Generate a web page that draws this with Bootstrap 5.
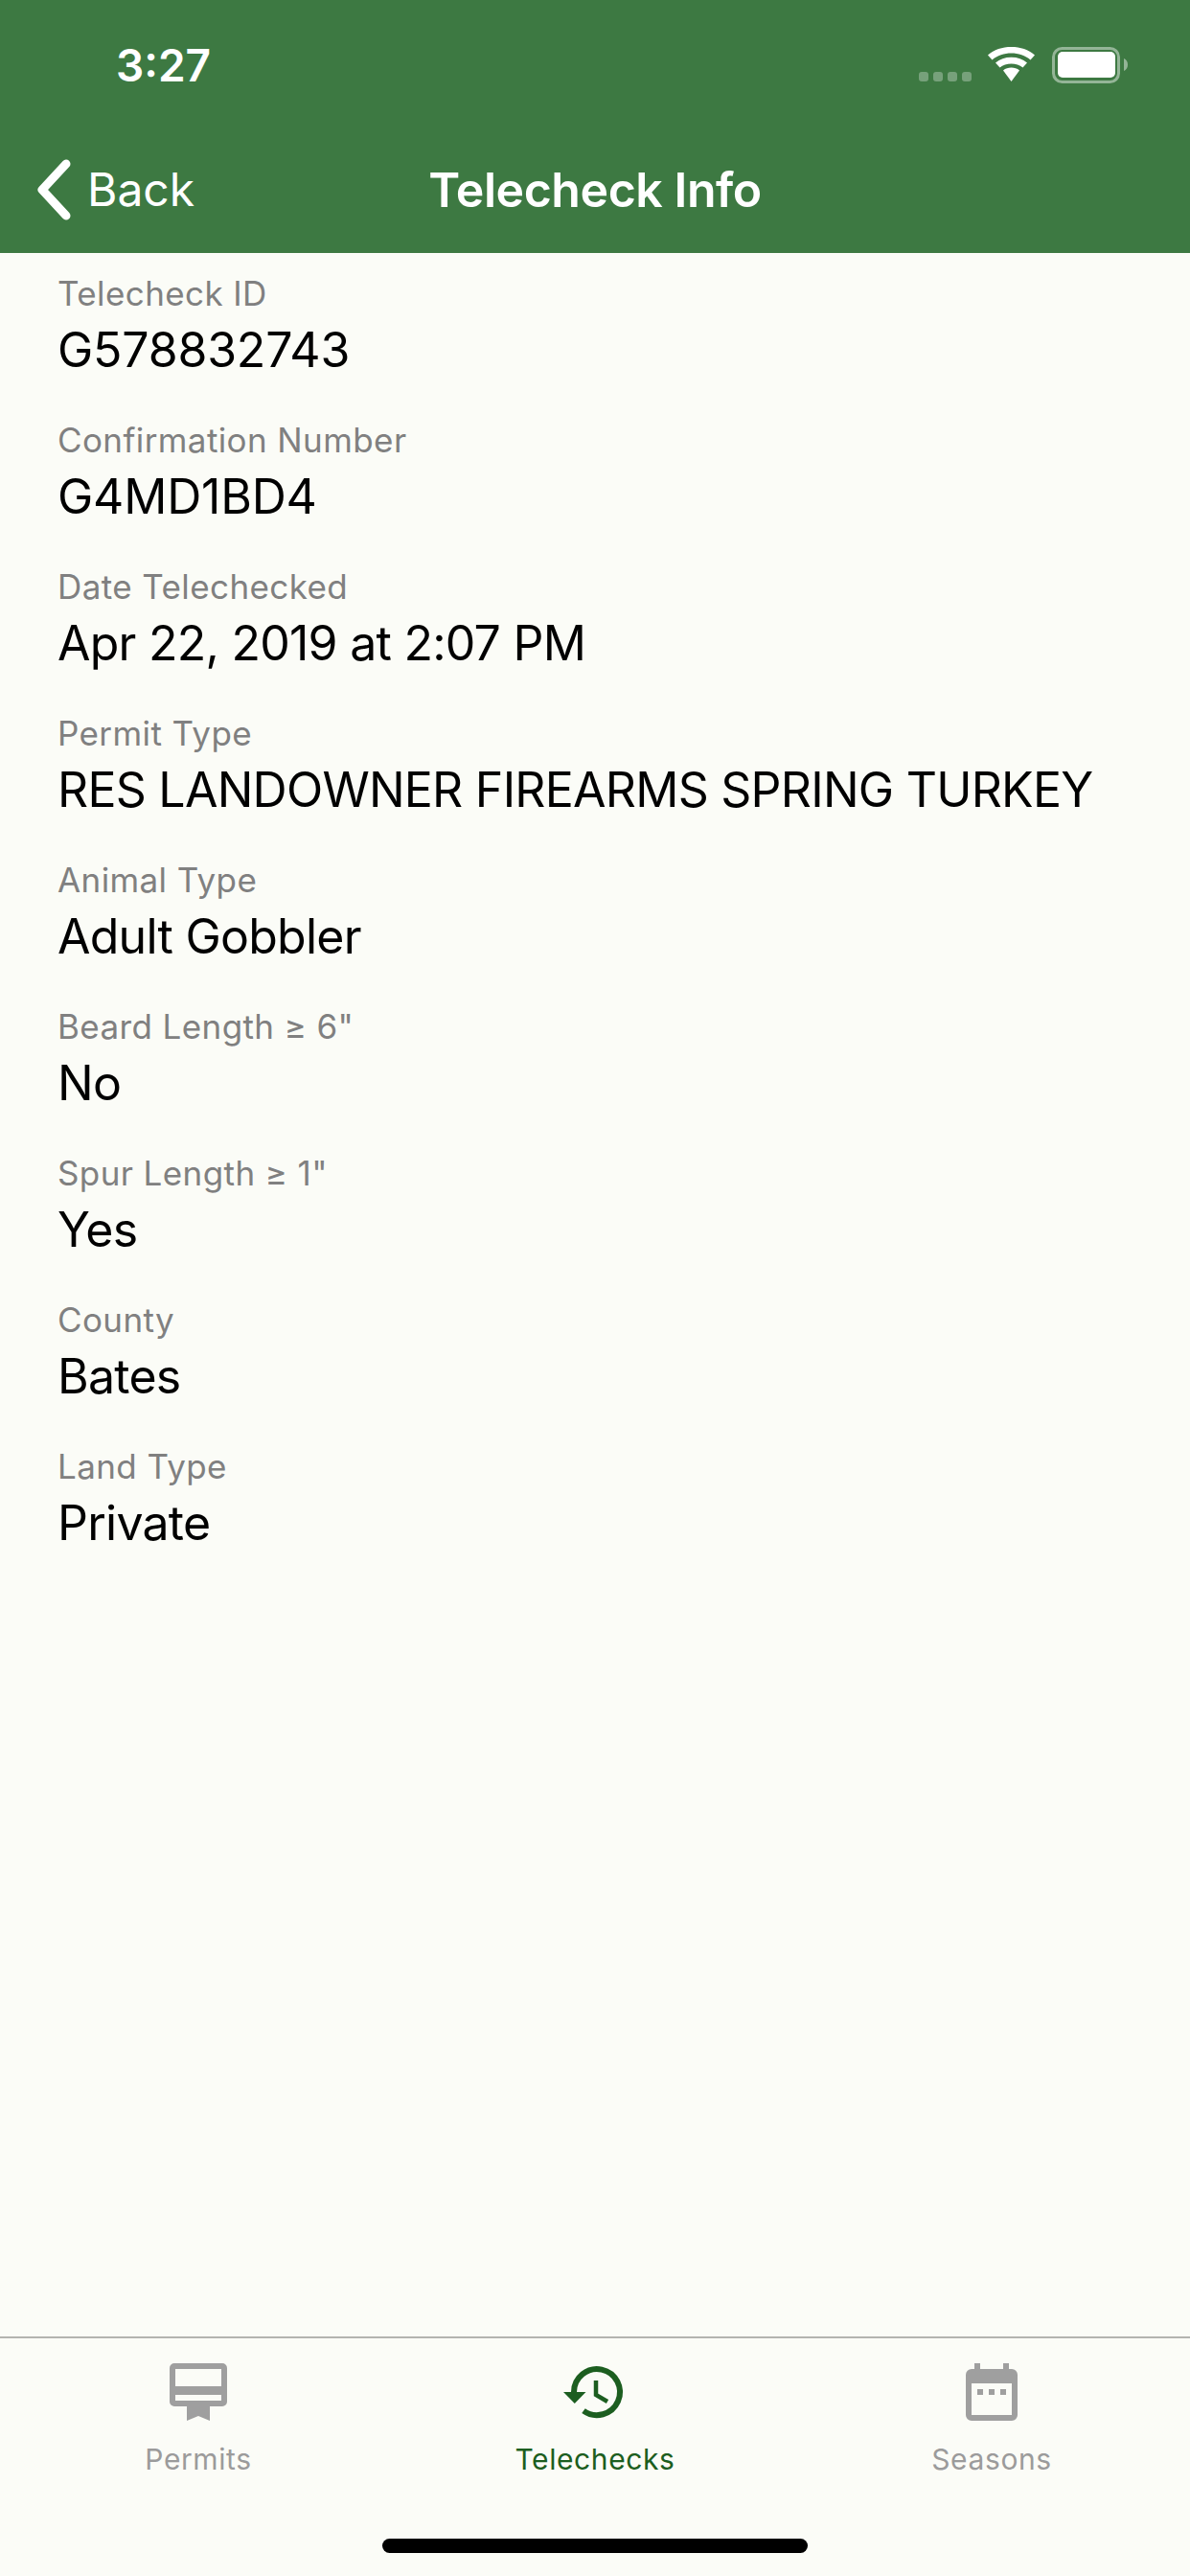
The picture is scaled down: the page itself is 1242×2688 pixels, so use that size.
<!DOCTYPE html>
<html lang="en">
<head>
<meta charset="utf-8">
<title>Telecheck Info</title>
<link rel="stylesheet" href="https://cdn.jsdelivr.net/npm/bootstrap@5.3.0/dist/css/bootstrap.min.css">
<style>
html,body{margin:0;height:2688px;background:#fbfcf7;}
body{font-family:Inter,"Liberation Sans",sans-serif;}
.phone{height:2688px;width:1242px;overflow:hidden;}
.app-head{background:#3d7942;color:#fff;height:264px;}
.status-row{height:132px;padding:0 65px 0 121px;}
.clock{font-size:46px;font-weight:600;line-height:1;margin-top:4px;}
.status-icons{margin-top:2px;}
.nav-row{height:132px;display:grid;grid-template-columns:1fr auto 1fr;align-items:center;}
.back-link{color:#fff;text-decoration:none;font-size:48px;line-height:1;padding-left:37px;gap:16px;}
.nav-title{font-size:50px;font-weight:600;line-height:1;letter-spacing:-.45px;}
.detail-list{padding:20px 60px 0;}
.detail-item{height:153px;}
.detail-label{font-size:35px;line-height:44px;color:#808080;letter-spacing:.4px;}
.detail-value{font-size:50px;line-height:60px;color:#000;margin-top:7px;letter-spacing:-.75px;}
.detail-value.code-value{letter-spacing:-.2px;}
.tabbar{border-top:2px solid #b4b4b0;height:250px;}
.tab-col{width:414px;}
.tab-icon{display:block;margin-top:26px;}
.tab-text{font-size:30px;line-height:36px;color:#9b9b9b;margin-top:22px;letter-spacing:.6px;}
.tab-col.on .tab-text{color:#1c5e20;}
.home-pill{width:444px;height:15px;background:#000;border-radius:8px;margin:0 auto;}
.tab-foot{height:24px;}
</style>
</head>
<body>
<div class="phone d-flex flex-column">
  <header class="app-head">
    <div class="status-row d-flex justify-content-between align-items-center">
      <div class="clock">3:27</div>
      <svg class="status-icons" width="218" height="40" viewBox="0 0 218 40" aria-hidden="true">
        <g fill="#fff" fill-opacity=".3">
          <rect x="0" y="28" width="10" height="10" rx="3"/><rect x="15" y="28" width="10" height="10" rx="3"/><rect x="30" y="28" width="10" height="10" rx="3"/><rect x="45" y="28" width="10" height="10" rx="3"/>
        </g>
        <g fill="#fff">
          <path d="M72 10.5C78.5 4.6 87 2 96.500 2S114.500 4.600 121 10.500L116.500 15.500C111 10.800 104 8.500 96.500 8.500S82 10.800 76.500 15.500Z"/>
          <path d="M80 18.500C84.500 14.700 90 12.800 96.500 12.800S108.500 14.700 113 18.500L108.500 23.500C105.300 20.800 101 19.500 96.500 19.500S87.700 20.800 84.500 23.500Z"/>
          <path d="M88 26.500C90.500 24.500 93.300 23.600 96.500 23.600S102.500 24.500 105 26.500L96.500 38Z"/>
        </g>
        <rect x="140.500" y="3.500" width="68" height="35" rx="9" fill="none" stroke="#fff" stroke-opacity=".45" stroke-width="3"/>
        <rect x="145" y="7" width="60" height="27" rx="5" fill="#fff"/>
        <path d="M214 14v13c2.500-1 4-3.500 4-6.500s-1.500-5.500-4-6.500Z" fill="#fff" fill-opacity=".45"/>
      </svg>
    </div>
    <div class="nav-row">
      <a class="back-link d-flex align-items-center" href="#">
        <svg width="38" height="64" viewBox="0 0 38 64" aria-hidden="true"><path d="M32 5 7 32l25 27" fill="none" stroke="#fff" stroke-width="9" stroke-linecap="round" stroke-linejoin="round"/></svg>
        <span>Back</span>
      </a>
      <div class="nav-title">Telecheck Info</div>
      <div></div>
    </div>
  </header>
  <main class="detail-list flex-grow-1">
    <div class="detail-item"><div class="detail-label">Telecheck ID</div><div class="detail-value code-value">G578832743</div></div>
    <div class="detail-item"><div class="detail-label">Confirmation Number</div><div class="detail-value code-value">G4MD1BD4</div></div>
    <div class="detail-item"><div class="detail-label">Date Telechecked</div><div class="detail-value">Apr 22, 2019 at 2:07 PM</div></div>
    <div class="detail-item"><div class="detail-label">Permit Type</div><div class="detail-value">RES LANDOWNER FIREARMS SPRING TURKEY</div></div>
    <div class="detail-item"><div class="detail-label">Animal Type</div><div class="detail-value">Adult Gobbler</div></div>
    <div class="detail-item"><div class="detail-label">Beard Length ≥ 6"</div><div class="detail-value">No</div></div>
    <div class="detail-item"><div class="detail-label">Spur Length ≥ 1"</div><div class="detail-value">Yes</div></div>
    <div class="detail-item"><div class="detail-label">County</div><div class="detail-value">Bates</div></div>
    <div class="detail-item"><div class="detail-label">Land Type</div><div class="detail-value">Private</div></div>
  </main>
  <footer class="tabbar d-flex flex-column">
    <nav class="d-flex flex-grow-1">
      <div class="tab-col d-flex flex-column align-items-center">
        <svg class="tab-icon" width="60" height="60" viewBox="0 0 60 60" aria-hidden="true">
          <path fill="#9f9f9f" fill-rule="evenodd" d="M5 0h50a5 5 0 0 1 5 5v35a5 5 0 0 1-5 5H42v15l-12-5-12 5V45H5a5 5 0 0 1-5-5V5a5 5 0 0 1 5-5ZM6 6v18h48V6ZM6 33v6h48v-6Z"/>
        </svg>
        <div class="tab-text">Permits</div>
      </div>
      <div class="tab-col on d-flex flex-column align-items-center">
        <svg class="tab-icon" width="66" height="60" viewBox="0 0 66 60" aria-hidden="true">
          <path d="M11 30A24 24 0 1 1 21 49.600" fill="none" stroke="#1c5e20" stroke-width="6"/>
          <path d="M0 30h23.500L11.750 42Z" fill="#1c5e20"/>
          <path d="M34 18v15l12 7" fill="none" stroke="#1c5e20" stroke-width="4.500"/>
        </svg>
        <div class="tab-text">Telechecks</div>
      </div>
      <div class="tab-col d-flex flex-column align-items-center">
        <svg class="tab-icon" width="54" height="60" viewBox="0 0 54 60" aria-hidden="true">
          <path fill="#9f9f9f" fill-rule="evenodd" d="M9 0h6v6h24V0h6v6h3a6 6 0 0 1 6 6v42a6 6 0 0 1-6 6H6a6 6 0 0 1-6-6V12a6 6 0 0 1 6-6h3ZM6 21v33h42V21ZM12 27h6v6h-6ZM24 27h6v6h-6ZM36 27h6v6h-6Z"/>
        </svg>
        <div class="tab-text">Seasons</div>
      </div>
    </nav>
    <div class="home-pill"></div>
    <div class="tab-foot"></div>
  </footer>
</div>
<script src="https://cdn.jsdelivr.net/npm/bootstrap@5.3.0/dist/js/bootstrap.bundle.min.js"></script>
</body>
</html>
